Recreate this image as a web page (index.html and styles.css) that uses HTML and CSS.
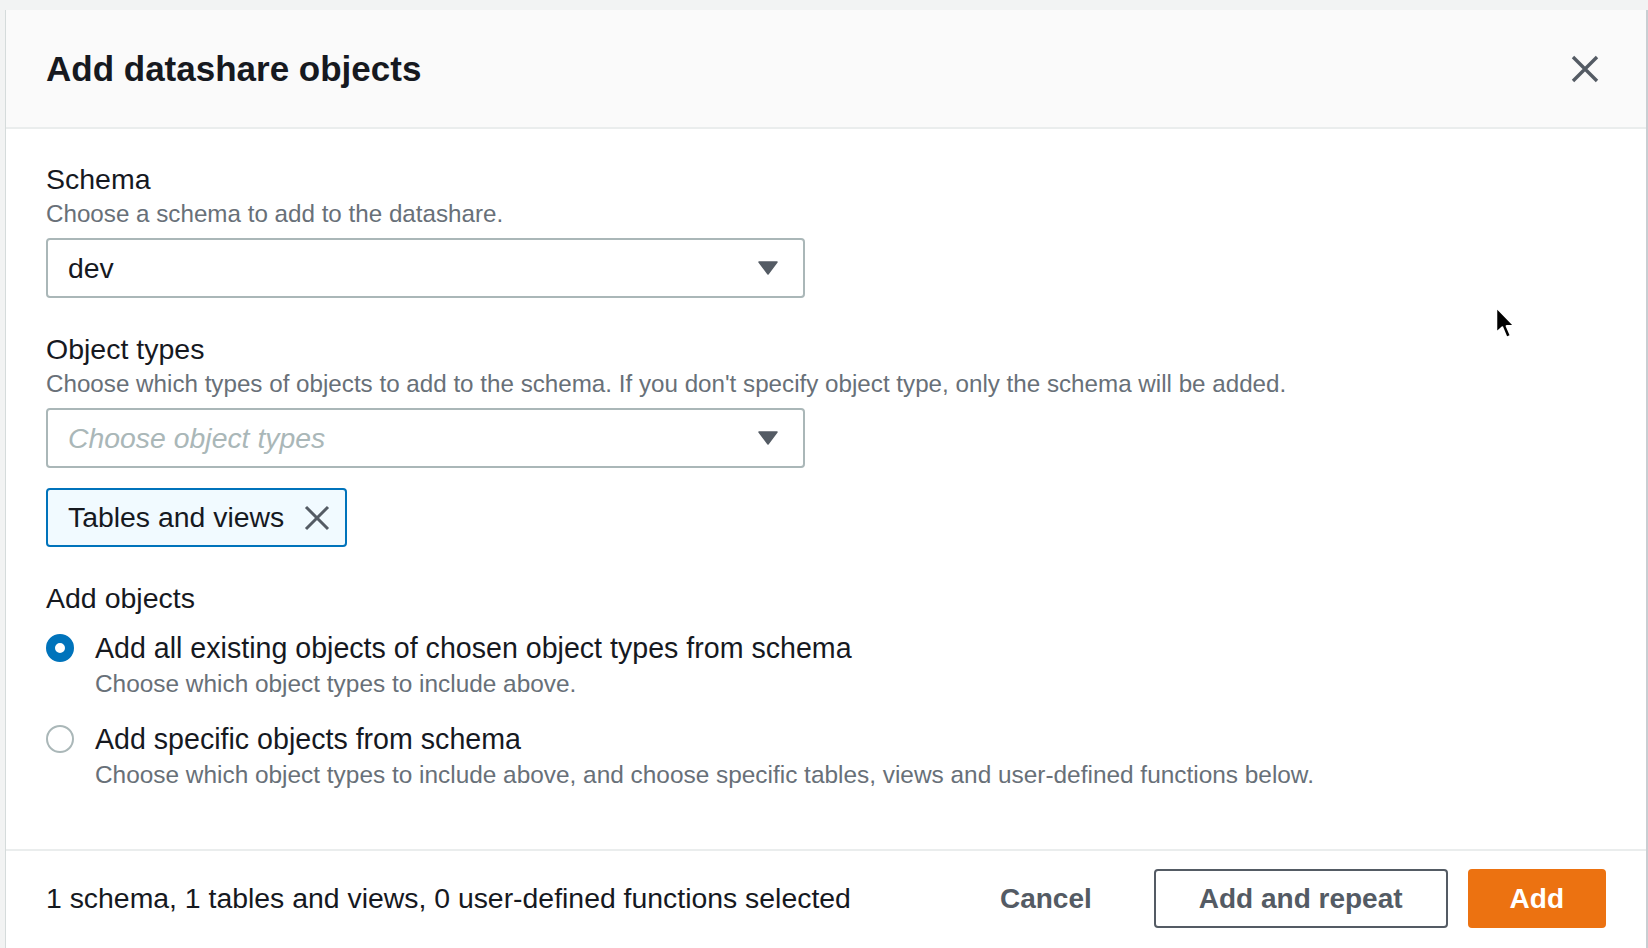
FILE: index.html
```html
<!DOCTYPE html>
<html lang="en">
<head>
<meta charset="utf-8">
<title>Add datashare objects</title>
<link rel="stylesheet" href="styles.css">
</head>
<body>
<div class="modal">
  <div class="modal-header">
    <h2 class="title">Add datashare objects</h2>
    <button class="close" aria-label="Close">
      <svg width="28" height="28" viewBox="0 0 28 28"><path d="M2 2 L26 26 M26 2 L2 26" stroke="#545b64" stroke-width="3.4" fill="none"/></svg>
    </button>
  </div>
  <div class="modal-body">
    <div class="field">
      <div class="label">Schema</div>
      <div class="desc">Choose a schema to add to the datashare.</div>
      <div class="select">
        <span class="value">dev</span>
        <svg class="caret" width="20" height="14" viewBox="0 0 20 14"><path d="M1 1 H19 L10 13 Z" fill="#545b64" stroke="#545b64" stroke-width="1.5" stroke-linejoin="round"/></svg>
      </div>
    </div>
    <div class="field">
      <div class="label">Object types</div>
      <div class="desc">Choose which types of objects to add to the schema. If you don't specify object type, only the schema will be added.</div>
      <div class="select">
        <span class="placeholder">Choose object types</span>
        <svg class="caret" width="20" height="14" viewBox="0 0 20 14"><path d="M1 1 H19 L10 13 Z" fill="#545b64" stroke="#545b64" stroke-width="1.5" stroke-linejoin="round"/></svg>
      </div>
      <div class="tokens">
        <div class="token">
          <span>Tables and views</span>
          <svg width="26" height="26" viewBox="0 0 26 26"><path d="M2 2 L24 24 M24 2 L2 24" stroke="#545b64" stroke-width="3" fill="none"/></svg>
        </div>
      </div>
    </div>
    <div class="field">
      <div class="label">Add objects</div>
      <div class="radio-group">
        <div class="radio-item">
          <div class="radio-row"><span class="radio checked"></span><span class="radio-label">Add all existing objects of chosen object types from schema</span></div>
          <div class="radio-desc">Choose which object types to include above.</div>
        </div>
        <div class="radio-item">
          <div class="radio-row"><span class="radio"></span><span class="radio-label">Add specific objects from schema</span></div>
          <div class="radio-desc">Choose which object types to include above, and choose specific tables, views and user-defined functions below.</div>
        </div>
      </div>
    </div>
  </div>
  <div class="modal-footer">
    <span class="summary">1 schema, 1 tables and views, 0 user-defined functions selected</span>
    <div class="actions">
      <button class="btn btn-link">Cancel</button>
      <button class="btn btn-normal">Add and repeat</button>
      <button class="btn btn-primary">Add</button>
    </div>
  </div>
</div>
<svg class="cursor" width="22" height="34" viewBox="0 0 18 28"><path d="M1 1 L1 22 L6 17.5 L9.5 26 L13 24.5 L9.5 16.5 L16 16.5 Z" fill="#000" stroke="#fff" stroke-width="1.6" stroke-linejoin="round"/></svg>
</body>
</html>
```

FILE: styles.css
```css
html, body {
  margin: 0;
  padding: 0;
}

body {
  background: #f2f3f3;
  font-family: "Liberation Sans", Arial, sans-serif;
  color: #16191f;
  height: 948px;
  overflow: hidden;
  padding-top: 10px;
  box-sizing: border-box;
  position: relative;
}

.modal {
  margin-left: 6px;
  width: 1640px;
  background: #ffffff;
  box-shadow: -1px 0 0 #d5dbdb, 2px 0 0 #c9ced2;
}

.modal-header {
  height: 117px;
  background: #fafafa;
  border-bottom: 2px solid #eaeded;
  display: flex;
  align-items: center;
  justify-content: space-between;
  padding: 0 47px 0 40px;
}

.title {
  margin: 0;
  font-size: 35px;
  font-weight: 700;
  color: #16191f;
}

.close {
  background: none;
  border: none;
  padding: 0;
  width: 28px;
  height: 28px;
  display: flex;
}

.modal-body {
  padding: 30px 40px 59px;
}

.field + .field {
  margin-top: 31px;
}

.label {
  font-size: 28.5px;
  line-height: 40px;
  color: #16191f;
}

.desc {
  font-size: 24.2px;
  line-height: 30px;
  color: #687078;
}

.select {
  box-sizing: border-box;
  width: 759px;
  height: 60px;
  margin-top: 9px;
  border: 2px solid #aab7b8;
  border-radius: 4px;
  display: flex;
  align-items: center;
  justify-content: space-between;
  padding: 0 25px 0 20px;
  font-size: 28.4px;
}

.value {
  color: #16191f;
}

.placeholder {
  color: #aab7b8;
  font-style: italic;
}

.tokens {
  margin-top: 20px;
  display: flex;
}

.token {
  box-sizing: border-box;
  height: 59px;
  display: inline-flex;
  align-items: center;
  gap: 20px;
  padding: 0 15px 0 20px;
  border: 2px solid #0073bb;
  border-radius: 4px;
  background: #f1faff;
  font-size: 28.4px;
  color: #16191f;
}

.radio-group {
  margin-top: 10px;
  display: flex;
  flex-direction: column;
  gap: 20px;
}

.radio-row {
  display: flex;
  align-items: center;
  gap: 21px;
  height: 40px;
}

.radio {
  box-sizing: border-box;
  width: 28px;
  height: 28px;
  border-radius: 50%;
  border: 2px solid #aab7b8;
  background: #fff;
  flex: none;
}

.radio.checked {
  border: 9px solid #0073bb;
}

.radio-label {
  font-size: 28.6px;
  color: #16191f;
}

.radio-desc {
  padding-left: 49px;
  font-size: 24.4px;
  line-height: 31px;
  color: #687078;
}

.modal-footer {
  border-top: 2px solid #eaeded;
  padding: 18px 40px 22px;
  display: flex;
  align-items: center;
  justify-content: space-between;
}

.summary {
  font-size: 28.4px;
  color: #16191f;
}

.actions {
  display: flex;
  align-items: center;
  gap: 20px;
}

.btn {
  box-sizing: border-box;
  height: 59px;
  padding: 0 40px;
  border-radius: 4px;
  border: 2px solid transparent;
  font-family: "Liberation Sans", Arial, sans-serif;
  font-size: 28px;
  font-weight: 700;
  cursor: pointer;
}

.btn-link {
  background: transparent;
  color: #545b64;
  padding: 0 40px;
}

.btn-normal {
  background: #ffffff;
  border-color: #545b64;
  color: #545b64;
  padding: 0 43px;
}

.btn-primary {
  background: #ec7211;
  border-color: #ec7211;
  color: #ffffff;
}

.cursor {
  position: absolute;
  left: 1495px;
  top: 306px;
}
```
